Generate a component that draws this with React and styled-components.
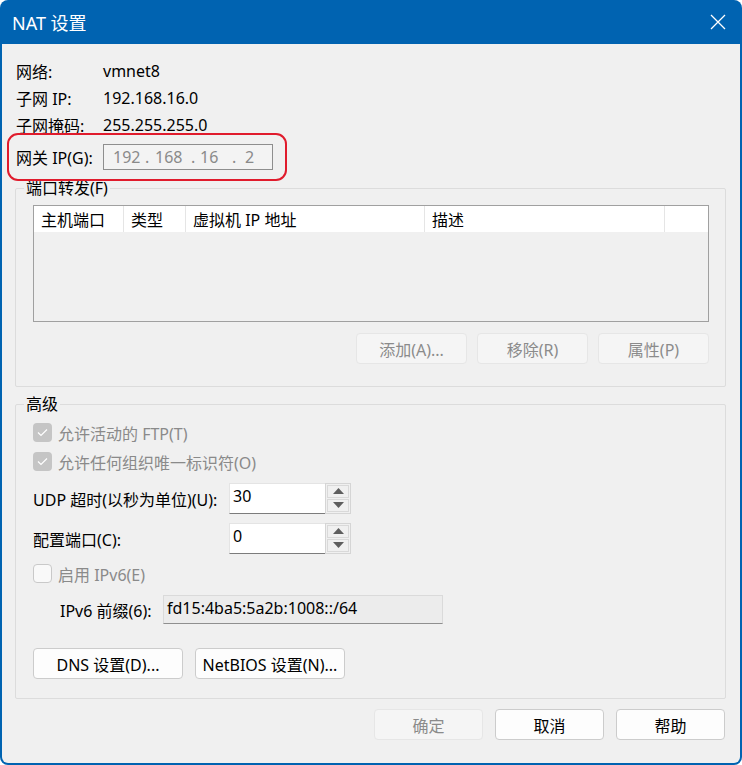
import React from "react";
import styled, { createGlobalStyle } from "styled-components";

const GlobalStyle = createGlobalStyle`
  html, body {
    margin: 0;
    padding: 0;
    background: #ffffff;
  }
  body {
    font-family: "Noto Sans", "Noto Sans CJK SC", sans-serif;
    font-size: 16px;
    color: #000;
  }
`;

const Window = styled.div`
  width: 742px;
  height: 765px;
  box-sizing: border-box;
  background: #0063b1;
  border-radius: 8px;
  padding: 0 2px 2px 2px;
  display: flex;
  flex-direction: column;
  overflow: hidden;
`;

const TitleBar = styled.div`
  height: 44px;
  flex: none;
  display: flex;
  align-items: center;
  justify-content: space-between;
  padding: 0 14px 0 10px;
  color: #fff;
  font-size: 18px;
`;

const Body = styled.div`
  flex: 1;
  background: #f0f0f0;
  border-radius: 0 0 6px 6px;
  padding: 13px 14px 0 13px;
  display: flex;
  flex-direction: column;
`;

const InfoRow = styled.div`
  display: flex;
  align-items: center;
  height: 27px;
  padding-left: 1px;
`;

const InfoLabel = styled.span`
  width: 87px;
  flex: none;
`;

const GatewayRow = styled.div`
  position: relative;
  display: flex;
  align-items: center;
  height: 28px;
  margin-top: 5px;
  padding-left: 1px;

  &::after {
    content: "";
    position: absolute;
    left: -8px;
    top: -10px;
    width: 280px;
    height: 48px;
    box-sizing: border-box;
    border: 2px solid #e01b2c;
    border-radius: 11px;
    pointer-events: none;
  }
`;

const IpBox = styled.div`
  width: 170px;
  height: 26px;
  box-sizing: border-box;
  border: 1px solid #8e8e8e;
  background: #f3f3f3;
  display: flex;
  align-items: center;
  color: #8a8a8a;
  font-size: 16px;
  padding-left: 9px;
`;

const IpPart = styled.span`
  width: ${p => p.w}px;
`;

const Group = styled.fieldset`
  margin: ${p => p.mt}px 0 0 0;
  border: 1px solid #dcdcdc;
  border-radius: 2px;
  padding: ${p => p.pad};
  min-width: 0;
  display: flex;
  flex-direction: column;
`;

const Legend = styled.legend`
  padding: 0 2px;
  margin-left: -9px;
  line-height: 20px;
`;

const Table = styled.div`
  height: 117px;
  box-sizing: border-box;
  border: 1px solid #a0a0a0;
  background: #f0f0f0;
`;

const HeaderRow = styled.div`
  display: grid;
  grid-template-columns: 90px 62px 239px 240px 1fr;
  height: 26px;
  background: #fff;
`;

const HeaderCell = styled.div`
  display: flex;
  align-items: center;
  padding-left: 7px;
  border-right: ${p => (p.last ? "none" : "1px solid #e5e5e5")};
`;

const ButtonRow = styled.div`
  display: flex;
  justify-content: ${p => p.justify || "flex-end"};
  gap: ${p => p.gap || 10}px;
  margin-top: ${p => p.mt || 0}px;
`;

const Button = styled.button`
  width: ${p => p.w || 111}px;
  height: 31px;
  box-sizing: border-box;
  border-radius: 4px;
  border: 1px solid ${p => (p.disabled ? "#e6e6e6" : "#cccccc")};
  background: ${p => (p.disabled ? "#f5f5f5" : "#fdfdfd")};
  color: ${p => (p.disabled ? "#8b8b8b" : "#000")};
  font-family: "Noto Sans", "Noto Sans CJK SC", sans-serif;
  font-size: 16px;
  padding: 0;
`;

const CheckRow = styled.label`
  display: flex;
  align-items: center;
  gap: 6px;
  height: 29px;
  margin-top: ${p => p.mt || 0}px;
  color: #8a8a8a;
`;

const Box = styled.span`
  width: 19px;
  height: 19px;
  box-sizing: border-box;
  border-radius: 4px;
  display: inline-flex;
  align-items: center;
  justify-content: center;
  background: ${p => (p.checked ? "#c5c5c5" : "#f9f9f9")};
  border: ${p => (p.checked ? "none" : "1px solid #c9c9c9")};
`;

const FieldRow = styled.div`
  display: flex;
  align-items: center;
  height: 30px;
  margin-top: ${p => p.mt || 0}px;
`;

const FieldLabel = styled.span`
  width: ${p => p.w}px;
  flex: none;
  padding-left: ${p => p.pl || 0}px;
  box-sizing: border-box;
  padding-top: 2px;
`;

const Spin = styled.div`
  display: flex;
  width: 122px;
  height: 31px;
`;

const SpinInput = styled.div`
  width: 96px;
  box-sizing: border-box;
  background: #fff;
  border-top: 1px solid #e4e4e4;
  border-left: 1px solid #e4e4e4;
  border-bottom: 1px solid #7c7c7c;
  padding: 1px 0 0 3px;
  font-size: 16px;
  line-height: 22px;
`;

const SpinButtons = styled.div`
  width: 26px;
  box-sizing: border-box;
  border: 1px solid #d5d5d5;
  display: flex;
  flex-direction: column;
  padding: 1px;
  gap: 1px;
`;

const SpinButton = styled.div`
  flex: 1;
  border: 1px solid #d9d9d9;
  background: #f0f0f0;
  display: flex;
  align-items: center;
  justify-content: center;
`;

const PrefixInput = styled.div`
  width: 280px;
  height: 29px;
  box-sizing: border-box;
  background: #ececec;
  border: 1px solid #dadada;
  border-bottom: 1px solid #8f8f8f;
  padding: 1px 0 0 3px;
  font-size: 16px;
  line-height: 22px;
`;

const Footer = styled.div`
  display: flex;
  justify-content: flex-end;
  gap: 12px;
  margin-top: 10px;
  padding-right: 1px;
`;

const Arrow = ({ up }) => (
  <svg width="11" height="6" viewBox="0 0 11 6">
    <path d={up ? "M0 6 L5.5 0 L11 6 Z" : "M0 0 L5.5 6 L11 0 Z"} fill="#5e5e5e" />
  </svg>
);

const Check = () => (
  <svg width="11" height="9" viewBox="0 0 11 9">
    <path d="M1 4.5 L4 7.5 L10 1.5" fill="none" stroke="#fff" strokeWidth="1.2" />
  </svg>
);

const CloseIcon = () => (
  <svg width="16" height="16" viewBox="0 0 16 16">
    <path d="M1 1 L15 15 M15 1 L1 15" stroke="#fff" strokeWidth="1.3" />
  </svg>
);

const SpinBox = ({ value }) => (
  <Spin>
    <SpinInput>{value}</SpinInput>
    <SpinButtons>
      <SpinButton><Arrow up /></SpinButton>
      <SpinButton><Arrow /></SpinButton>
    </SpinButtons>
  </Spin>
);

const CheckOption = ({ checked, mt, children }) => (
  <CheckRow mt={mt}>
    <Box checked={checked}>{checked && <Check />}</Box>
    <span>{children}</span>
  </CheckRow>
);

export default function App() {
  return (
    <>
      <GlobalStyle />
      <Window>
        <TitleBar>
          <span>NAT 设置</span>
          <CloseIcon />
        </TitleBar>
        <Body>
          <InfoRow><InfoLabel>网络:</InfoLabel><span>vmnet8</span></InfoRow>
          <InfoRow><InfoLabel>子网 IP:</InfoLabel><span>192.168.16.0</span></InfoRow>
          <InfoRow><InfoLabel>子网掩码:</InfoLabel><span>255.255.255.0</span></InfoRow>
          <GatewayRow>
            <InfoLabel>网关 IP(G):</InfoLabel>
            <IpBox>
              <IpPart w={32}>192</IpPart>
              <IpPart w={10}>.</IpPart>
              <IpPart w={36}>168</IpPart>
              <IpPart w={9}>.</IpPart>
              <IpPart w={32}>16</IpPart>
              <IpPart w={13}>.</IpPart>
              <IpPart w={12}>2</IpPart>
            </IpBox>
          </GatewayRow>

          <Group mt={7} pad="7px 16px 22px 17px">
            <Legend>端口转发(F)</Legend>
            <Table>
              <HeaderRow>
                <HeaderCell>主机端口</HeaderCell>
                <HeaderCell>类型</HeaderCell>
                <HeaderCell>虚拟机 IP 地址</HeaderCell>
                <HeaderCell>描述</HeaderCell>
                <HeaderCell last />
              </HeaderRow>
            </Table>
            <ButtonRow mt={11}>
              <Button disabled>添加(A)...</Button>
              <Button disabled>移除(R)</Button>
              <Button disabled>属性(P)</Button>
            </ButtonRow>
          </Group>

          <Group mt={7} pad="4px 16px 19px 17px">
            <Legend>高级</Legend>
            <CheckOption checked>允许活动的 FTP(T)</CheckOption>
            <CheckOption checked>允许任何组织唯一标识符(O)</CheckOption>
            <FieldRow mt={7}>
              <FieldLabel w={196}>UDP 超时(以秒为单位)(U):</FieldLabel>
              <SpinBox value="30" />
            </FieldRow>
            <FieldRow mt={10}>
              <FieldLabel w={196}>配置端口(C):</FieldLabel>
              <SpinBox value="0" />
            </FieldRow>
            <CheckOption mt={6}>启用 IPv6(E)</CheckOption>
            <FieldRow mt={6}>
              <FieldLabel w={130} pl={27}>IPv6 前缀(6):</FieldLabel>
              <PrefixInput>fd15:4ba5:5a2b:1008::/64</PrefixInput>
            </FieldRow>
            <ButtonRow justify="flex-start" gap={12} mt={24}>
              <Button w={150}>DNS 设置(D)...</Button>
              <Button w={150}>NetBIOS 设置(N)...</Button>
            </ButtonRow>
          </Group>

          <Footer>
            <Button w={109} disabled>确定</Button>
            <Button w={109}>取消</Button>
            <Button w={109}>帮助</Button>
          </Footer>
        </Body>
      </Window>
    </>
  );
}
